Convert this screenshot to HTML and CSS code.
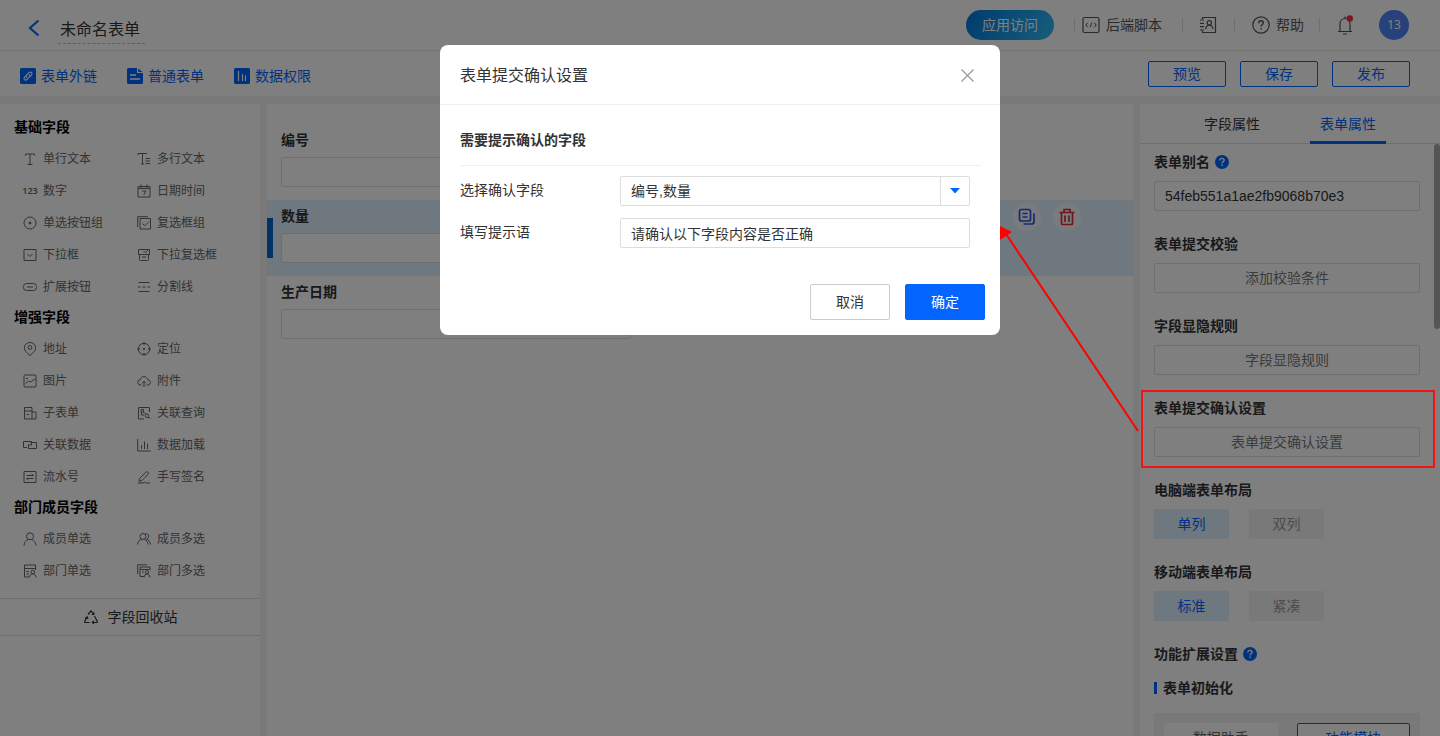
FILE: index.html
```html
<!DOCTYPE html>
<html lang="zh-CN">
<head>
<meta charset="utf-8">
<title>未命名表单</title>
<link rel="stylesheet" href="styles.css">
</head>
<body>
<div class="app">
  <header class="topbar">
    <button class="back" aria-label="返回"><svg width="12" height="18" viewBox="0 0 12 18"><path d="M10.500 1.500 2 9l8.500 7.500" fill="none" stroke="#0265ff" stroke-width="2.200"/></svg></button>
    <h1 class="form-name">未命名表单</h1>
    <div class="top-actions">
      <button class="visit">应用访问</button>
      <button class="top-item script"><svg width="18" height="18" viewBox="0 0 18 18" class="ln"><rect x="1" y="1.500" width="16" height="15" rx="1.500"/><path d="M5.800 6.800 3.800 9l2 2.200M12.200 6.800l2 2.200-2 2.200M9.800 6.800l-1.600 4.400" stroke-width="1"/></svg><span>后端脚本</span></button>
      <button class="top-item contacts" aria-label="通讯录"><svg width="18" height="18" viewBox="0 0 18 18" class="ln"><path d="M3.500 3V1.500h13v15h-13V15M1 4h4M1 7.300h4M1 10.700h4M1 14h4"/><circle cx="10.300" cy="6.800" r="2.200"/><path d="M6.600 13.200c.4-2.600 1.800-4 3.700-4s3.300 1.400 3.700 4"/></svg></button>
      <button class="top-item help"><svg width="18" height="18" viewBox="0 0 18 18" class="ln"><circle cx="9" cy="9" r="8.200"/><path d="M6.700 7.200c0-1.500 1-2.400 2.300-2.400s2.300.9 2.300 2.100c0 1.600-2.200 1.800-2.200 3.700M9.100 12v1.500" stroke-width="1.400"/></svg><span>帮助</span></button>
      <button class="top-item bell" aria-label="消息"><svg width="18" height="20" viewBox="0 0 18 20"><path class="ln" d="M2 16.500h14M4 16.500V9c0-3.200 2-5.500 5-5.500s5 2.300 5 5.500v7.500M9 1.500v2M7 19h4" stroke-width="1.300"/><circle cx="13.800" cy="3.500" r="3.200" fill="#f5333a"/></svg></button>
      <span class="avatar">13</span>
    </div>
  </header>

  <nav class="toolbar">
    <a class="tool" href="#"><svg width="16" height="16" viewBox="0 0 16 16"><rect width="16" height="16" rx="1.500" fill="#0265ff"/><g fill="none" stroke="#fff" stroke-width="1.100"><path d="M7 9.700c-1.200-.9-1-2 .2-3.200l1.800-1.800c1.800-1.600 4 .4 2.600 2.200L10 8.700"/><path d="M9 6.500c1.200.9 1 2-.2 3.200L7 11.500c-1.800 1.600-4-.4-2.600-2.200L6 7.500"/></g></svg>表单外链</a>
    <a class="tool" href="#"><svg width="16" height="16" viewBox="0 0 16 16"><path d="M1.500 0H10v5h6v9.500a1.500 1.500 0 0 1-1.500 1.500h-13A1.500 1.500 0 0 1 0 14.500v-13A1.500 1.500 0 0 1 1.500 0z" fill="#0265ff"/><path d="M11.200.5 15.500 4h-4.300z" fill="#0265ff"/><path d="M3 7h6M3 11h10" stroke="#fff" stroke-width="1.400"/></svg>普通表单</a>
    <a class="tool" href="#"><svg width="16" height="16" viewBox="0 0 16 16"><rect width="16" height="16" rx="1.500" fill="#0265ff"/><path d="M4.500 3v10M8.500 6v7M11.500 7.500V13" stroke="#fff" stroke-width="1.200"/></svg>数据权限</a>
    <div class="form-actions">
      <button>预览</button><button>保存</button><button>发布</button>
    </div>
  </nav>

  <main class="workspace">
    <aside class="palette">
      <div class="palette-list">
        <h2>基础字段</h2>
        <div class="fields">
          <button><svg viewBox="0 0 14 14"><path d="M2.500 3.500V2h9v1.500M7 2v10.500M4.500 12.500h5"/></svg>单行文本</button>
          <button><svg viewBox="0 0 14 14"><path d="M1 3V1.500h9M5.500 1.500V12M4 12h3M8.500 6.500H13M8.500 9H13M8.500 11.500H13"/></svg>多行文本</button>
          <button><span class="digits">123</span>数字</button>
          <button><svg viewBox="0 0 14 14"><path d="M1 2.500h12v10.500H1zM4 .5v4M10 .5v4M1 4.500h12M5 7h4L6.700 11"/></svg>日期时间</button>
          <button><svg viewBox="0 0 14 14"><circle cx="7" cy="7" r="6"/><circle cx="7" cy="7" r="1" fill="#666"/></svg>单选按钮组</button>
          <button><svg viewBox="0 0 14 14"><path d="M3 2.500h10.500v10.500H3zM.7 11V.7H11M5.500 7.500l2.300 2.300L12 5.500"/></svg>复选框组</button>
          <button><svg viewBox="0 0 14 14"><path d="M1 1.500h12v11H1zM4.500 6 7 8.500 9.500 6"/></svg>下拉框</button>
          <button><svg viewBox="0 0 14 14"><path d="M1.500 1.500h11v5h-11zM2.500 6.500v5c0 .6.400 1 1 1h7c.6 0 1-.4 1-1v-5M6.500 3l1.700 1.700L11 2.200M5 9h4"/></svg>下拉复选框</button>
          <button><svg viewBox="0 0 14 14"><rect x=".500" y="3.500" width="13" height="7" rx="3"/><path d="M4 7h6"/></svg>扩展按钮</button>
          <button><svg viewBox="0 0 14 14"><path d="M1.500 2.500h11M1.500 11.500h11M1 7h2.500M5.500 7h3M10.500 7H13"/></svg>分割线</button>
        </div>
        <h2>增强字段</h2>
        <div class="fields">
          <button><svg viewBox="0 0 14 14"><path d="M7 13.500C3.500 10.500 1.300 8.500 1.300 5.800a5.700 5.300 0 0 1 11.400 0c0 2.700-2.200 4.700-5.700 7.700z"/><circle cx="7" cy="5.500" r="1.900"/></svg>地址</button>
          <button><svg viewBox="0 0 14 14"><circle cx="7" cy="7" r="5.700"/><path d="M7 .2v3M7 10.800v3M.2 7h3M10.800 7h3"/><circle cx="7" cy="7" r=".700" fill="#666"/></svg>定位</button>
          <button><svg viewBox="0 0 14 14"><rect x="1" y="1" width="12" height="12" rx="1"/><path d="M3 4.500h2M2.500 9.500 5.500 7l2 1L12 5"/></svg>图片</button>
          <button><svg viewBox="0 0 14 14"><path d="M4.500 11H3.200C-.3 10.500.2 6 3 6c.6-4.500 7.300-4.500 8 0 3 0 3.300 4.500 0 5H9.500M7 13V7.500M5 9.300l2-2 2 2"/></svg>附件</button>
          <button><svg viewBox="0 0 14 14"><path d="M8 13H1.500V1.500H9V13M9 6h4v7H8M1.500 5H9M3.500 8.500H6"/></svg>子表单</button>
          <button><svg viewBox="0 0 14 14"><path d="M7 13H1.500V1.500h11V6M4 3.500h2.500V6H4zM6.500 6 9 8.500M4.500 6v3H7"/><circle cx="10" cy="9.800" r="1.800"/><path d="m11.300 11 2 2"/></svg>关联查询</button>
          <button><svg viewBox="0 0 14 14"><path d="M4 9.500H.5v-6H8.500V7H6.500M7.500 4.500h6v6h-8V6"/></svg>关联数据</button>
          <button><svg viewBox="0 0 14 14"><path d="M.7 1v12h13M4.500 11V7M7.500 11V3.500M10.500 11V5.500"/></svg>数据加载</button>
          <button><svg viewBox="0 0 14 14"><path d="M1 1.500h12v11H1zM3.500 5.500h7L8.700 4M10.500 8.500h-7L5.300 10"/></svg>流水号</button>
          <button><svg viewBox="0 0 14 14"><path d="M2.500 8.500 9.300 2c1-1 3 .7 2 2L5 10.500l-3 .8zM1 13h5l1.500-1 1 1H13"/></svg>手写签名</button>
        </div>
        <h2>部门成员字段</h2>
        <div class="fields">
          <button><svg viewBox="0 0 14 14"><circle cx="7" cy="4.300" r="3.500"/><path d="M1 13.500c.3-3.500 2-5.200 4.500-6M13 13.500c-.3-3.500-2-5.200-4.500-6"/></svg>成员单选</button>
          <button><svg viewBox="0 0 14 14"><circle cx="6" cy="4.500" r="3"/><path d="M.5 12.500c.3-3 1.800-4.500 4-5.200M11 12.500c-.3-3-1.500-4.500-3.500-5.200M8.500 1.500c4 0 4 4.500 1.200 5.700 2 .8 3.500 2.300 3.800 5.300"/></svg>成员多选</button>
          <button><svg viewBox="0 0 14 14"><path d="M6 13H1.500V1h11v5M1.500 4.500h11M3.500 7.500H6M3.500 10H6"/><circle cx="9.800" cy="8" r="1.800"/><path d="M6.500 13.500c.4-2.500 1.600-3.700 3.300-3.700s2.900 1.200 3.300 3.700"/></svg>部门单选</button>
          <button><svg viewBox="0 0 14 14"><path d="M.7 10V.8H10M7 12.500H3V3h10v3M3 5.500h10M5 8h2"/><circle cx="10" cy="8.300" r="1.600"/><path d="M7 13.500c.4-2.300 1.400-3.500 3-3.500s2.700 1.200 3 3.500"/></svg>部门多选</button>
        </div>
      </div>
      <button class="recycle"><svg width="16" height="14" viewBox="0 0 16 14"><path d="m5 4.500 3-3.700 2.700 3.700M11.500 6l2.800 5.500c.2.600 0 1-.6 1H9.500M6.500 12.500H2.300c-.6 0-.8-.5-.6-1L4 7M8.800 4.500h2V2.300M10.800 11l-1.500 1.500 1.500 1.300M2 8.500 4.200 7l.9 2"/></svg>字段回收站</button>
    </aside>

    <section class="canvas">
      <div class="form-field">
        <label for="f-no">编号</label>
        <input id="f-no" type="text">
      </div>
      <div class="form-field selected">
        <label for="f-qty">数量</label>
        <input id="f-qty" type="text">
        <div class="field-tools">
          <button aria-label="复制"><svg width="18" height="18" viewBox="0 0 18 18"><g fill="none" stroke="#2a55e8" stroke-width="1.700"><rect x="1.500" y="1.500" width="11" height="11.500" rx="2"/><path d="M4.500 5.500h5M4.500 9h5M5.500 16h8c1.700 0 2.500-.8 2.500-2.500v-8"/></g></svg></button>
          <button aria-label="删除"><svg width="16" height="18" viewBox="0 0 16 18"><path d="M.5 4.500h15M5 4.500V1.500h6v3M2.500 4.500v11c0 .6.400 1 1 1h9c.6 0 1-.4 1-1v-11M6 7.500V14M10 7.500V14" fill="none" stroke="#e02d3c" stroke-width="1.700"/></svg></button>
        </div>
      </div>
      <div class="form-field">
        <label for="f-date">生产日期</label>
        <input id="f-date" type="text">
      </div>
    </section>

    <aside class="props">
      <div class="tabs" role="tablist">
        <button role="tab" aria-selected="false">字段属性</button>
        <button role="tab" aria-selected="true" class="active">表单属性</button>
      </div>
      <div class="props-body">
        <div class="prop">
          <label for="alias">表单别名 <svg class="q" viewBox="0 0 14 14"><circle cx="7" cy="7" r="7" fill="#0265ff"/><path d="M4.900 5.500c0-1.300.9-2.100 2.100-2.100s2.100.7 2.100 1.800c0 1.500-2 1.500-2 3.200M7.100 9.600v1.400" fill="none" stroke="#fff" stroke-width="1.400"/></svg></label>
          <input id="alias" type="text" value="54feb551a1ae2fb9068b70e3">
        </div>
        <div class="prop"><h3>表单提交校验</h3><button class="wide">添加校验条件</button></div>
        <div class="prop"><h3>字段显隐规则</h3><button class="wide">字段显隐规则</button></div>
        <div class="prop"><h3>表单提交确认设置</h3><button class="wide">表单提交确认设置</button></div>
        <div class="prop"><h3>电脑端表单布局</h3><div class="choice"><button class="on">单列</button><button>双列</button></div></div>
        <div class="prop"><h3>移动端表单布局</h3><div class="choice"><button class="on">标准</button><button>紧凑</button></div></div>
        <div class="extend">
          <h3>功能扩展设置 <svg class="q" viewBox="0 0 14 14"><circle cx="7" cy="7" r="7" fill="#0265ff"/><path d="M4.900 5.500c0-1.300.9-2.100 2.100-2.100s2.100.7 2.100 1.800c0 1.500-2 1.500-2 3.200M7.100 9.600v1.400" fill="none" stroke="#fff" stroke-width="1.400"/></svg></h3>
          <h4>表单初始化</h4>
          <div class="init"><button>数据助手</button><button class="on">功能模块</button></div>
        </div>
      </div>
      <div class="scrollbar"></div>
    </aside>
  </main>
</div>

<div class="mask">
  <form class="dialog" role="dialog" aria-labelledby="dlg-title">
    <header class="dialog-head">
      <h2 id="dlg-title">表单提交确认设置</h2>
      <button type="button" class="close" aria-label="关闭"><svg width="13" height="13" viewBox="0 0 13 13"><path d="m.5.500 12 12M12.500.500l-12 12" stroke="#999" stroke-width="1.300"/></svg></button>
    </header>
    <div class="dialog-body">
      <h3>需要提示确认的字段</h3>
      <div class="row">
        <label for="pick">选择确认字段</label>
        <div class="select">
          <select id="pick"><option>编号,数量</option></select>
          <span class="caret"><svg width="10" height="6" viewBox="0 0 10 6"><path d="M0 0h10L5 5.500z" fill="#0265ff"/></svg></span>
        </div>
      </div>
      <div class="row">
        <label for="hint">填写提示语</label>
        <input id="hint" type="text" value="请确认以下字段内容是否正确">
      </div>
    </div>
    <footer class="dialog-foot">
      <button type="button">取消</button>
      <button type="submit" class="primary">确定</button>
    </footer>
  </form>
  <svg class="arrow" width="140" height="206" viewBox="0 0 140 206"><path d="M138 205 6 8" stroke="#f00" stroke-width="2"/><path d="M0 0 12 6 0 14z" fill="#f00"/></svg>
  <div class="marker"></div>
</div>
</body>
</html>
```
FILE: styles.css
```css
* { box-sizing: border-box; }

body {
  margin: 0;
  font-family: "Liberation Sans", "Noto Sans CJK SC", sans-serif;
  font-size: 14px;
  line-height: 20px;
  color: #333;
  overflow: hidden;
}

h1, h2, h3, h4 { margin: 0; font-size: 14px; font-weight: bold; }

button, input, select { font: inherit; color: inherit; margin: 0; }

button { background: none; border: 0; padding: 0; cursor: pointer; white-space: nowrap; }

svg { flex: none; display: block; }

.ln { fill: none; stroke: #555; stroke-width: 1.2; }

.app { height: 100vh; display: flex; flex-direction: column; background: #f2f2f2; }

/* Top bar */
.topbar {
  flex: none;
  display: flex;
  align-items: center;
  height: 51px;
  padding: 0 31px 0 28px;
  background: #fff;
  border-bottom: 1px solid #e8e8e8;
}
.back { padding-top: 6px; }
.form-name {
  margin: 14px 0 6px 18px;
  padding: 5px 5px 3px 2px;
  font-size: 16px;
  line-height: 20px;
  font-weight: normal;
  border-bottom: 1px dashed #bbb;
}
.top-actions { margin-left: auto; display: flex; align-items: center; color: #555; }
.visit {
  width: 88px;
  height: 30px;
  margin-right: 20px;
  border-radius: 15px;
  background: linear-gradient(120deg, #0078dc, #30bbf5);
  color: #fff;
}
.top-item { display: flex; align-items: center; height: 18px; }
.top-item::before { content: ""; width: 1px; height: 14px; background: #ddd; }
.script { gap: 6px; margin-right: 20px; }
.script::before { margin-right: 1px; }
.contacts { gap: 16px; margin-right: 17px; }
.help { gap: 6px; margin-right: 15px; }
.help::before { margin-right: 11px; }
.bell { gap: 16px; margin-right: 25px; }
.avatar {
  width: 30px;
  height: 30px;
  border-radius: 50%;
  background: #4f82f7;
  color: #fff;
  font-family: "Noto Sans", sans-serif;
  font-size: 12px;
  line-height: 30px;
  text-align: center;
}

/* Form toolbar */
.toolbar {
  flex: none;
  display: flex;
  align-items: center;
  gap: 30px;
  height: 45px;
  padding: 0 30px 0 20px;
  background: #fff;
}
.tool { display: flex; align-items: center; gap: 5px; padding-top: 4px; color: #0265ff; text-decoration: none; }
.form-actions { margin-left: auto; display: flex; gap: 14px; }
.form-actions button {
  width: 78px;
  height: 26px;
  border: 1px solid #0265ff;
  border-radius: 2px;
  color: #0265ff;
}

/* Three column workspace */
.workspace {
  flex: 1;
  min-height: 0;
  margin-top: 8px;
  display: grid;
  grid-template-columns: 260px 1fr 300px;
  gap: 7px;
}
.workspace > * { background: #fff; min-height: 0; }

.palette-list { padding: 8px 0 12px; }
.palette-list h2 { padding-left: 14px; line-height: 30px; color: #000; }
.fields { display: grid; grid-template-columns: 114px 1fr; padding-left: 23px; }
.fields button {
  display: flex;
  align-items: center;
  gap: 6px;
  height: 32px;
  padding-top: 1px;
  font-size: 12px;
  color: #666;
}
.fields svg { width: 14px; height: 14px; }
.fields svg, .recycle svg { fill: none; stroke: #666; stroke-width: 1; }
.digits { width: 14px; display: flex; justify-content: center; font-family: "Noto Sans", sans-serif; font-size: 9px; font-weight: 600; }
.recycle {
  width: 100%;
  height: 38px;
  display: flex;
  align-items: center;
  justify-content: center;
  gap: 9px;
  border-top: 1px solid #ddd;
  border-bottom: 1px solid #ddd;
}
.recycle svg { stroke: #333; stroke-width: 1.2; }

.canvas { padding-top: 20px; }
.form-field { position: relative; height: 76px; padding: 6px 14px 0; }
.form-field label { display: block; height: 27px; font-weight: bold; }
.form-field input { display: block; width: 350px; height: 30px; border: 1px solid #ddd; border-radius: 2px; background: #fff; }
.selected { background: #e0f0ff; }
.selected::before {
  content: "";
  position: absolute;
  left: 0;
  top: 18px;
  width: 6px;
  height: 40px;
  background: #0265c8;
}
.field-tools { position: absolute; right: 52px; top: 3px; display: flex; gap: 12px; }
.field-tools button {
  width: 28px;
  height: 28px;
  display: flex;
  align-items: center;
  justify-content: center;
  border-radius: 50%;
  background: #f4f6fa;
}

/* Properties */
.props { position: relative; overflow: hidden; }
.tabs {
  display: flex;
  justify-content: center;
  gap: 40px;
  height: 40px;
  border-bottom: 1px solid #ddd;
}
.tabs button { width: 76px; height: 40px; }
.tabs .active { color: #0265ff; border-bottom: 3px solid #0265ff; padding-top: 3px; }
.props-body { padding: 8px 20px 0 14px; display: flex; flex-direction: column; gap: 23px; }
.prop { display: flex; flex-direction: column; gap: 9px; }
.prop label, .extend h3 { display: flex; align-items: center; gap: 5px; font-weight: bold; }
.q { width: 14px; height: 14px; }
.prop input { width: 100%; height: 30px; padding: 0 10px; border: 1px solid #ddd; border-radius: 2px; }
.wide { height: 30px; border: 1px solid #ddd; border-radius: 2px; color: #777; }
.choice { display: flex; gap: 20px; }
.choice button { width: 75px; height: 30px; background: #f2f2f2; color: #999; }
.choice .on { background: #e0f0ff; color: #0265ff; }
.extend h4 { display: flex; align-items: center; gap: 6px; margin: 14px 0 15px; }
.extend h4::before { content: ""; width: 3px; height: 12px; background: #0265ff; }
.init { display: grid; grid-template-columns: 1fr 1fr; gap: 19px; padding: 10px; background: #f2f2f2; }
.init button { height: 30px; background: #fff; color: #666; }
.init .on { border: 1px solid #0265ff; border-radius: 2px; color: #0265ff; }
.scrollbar {
  position: absolute;
  top: 40px;
  right: 0;
  width: 6px;
  height: 185px;
  border-radius: 3px;
  background: #aaa;
}

/* Dialog */
.mask {
  position: fixed;
  inset: 0;
  padding-top: 45px;
  background: rgba(0, 0, 0, 0.5);
}
.dialog { width: 560px; margin: 0 auto; border-radius: 8px; background: #fff; }
.dialog-head {
  display: flex;
  align-items: center;
  justify-content: space-between;
  height: 60px;
  padding: 2px 26px 0 20px;
  border-bottom: 1px solid #eee;
}
.dialog-head h2 { font-size: 16px; font-weight: normal; }
.dialog-body { padding: 25px 19px 36px 20px; }
.dialog-body h3 { padding-bottom: 15px; margin-bottom: 10px; border-bottom: 1px solid #eee; }
.row { display: grid; grid-template-columns: 160px 350px; align-items: start; margin-bottom: 12px; }
.row:last-child { margin-bottom: 0; }
.row label { line-height: 28px; }
.row input, .select { width: 100%; height: 30px; border: 1px solid #ddd; border-radius: 2px; }
.row input { padding: 0 10px; }
.select { position: relative; }
.select select { width: 100%; height: 28px; padding: 0 40px 0 10px; border: 0; background: none; appearance: none; }
.caret {
  position: absolute;
  top: 0;
  right: 0;
  bottom: 0;
  width: 29px;
  display: flex;
  align-items: center;
  justify-content: center;
  border-left: 1px solid #ddd;
  pointer-events: none;
}
.dialog-foot { display: flex; justify-content: flex-end; gap: 15px; padding: 0 15px 15px; }
.dialog-foot button { width: 80px; height: 36px; border: 1px solid #ccc; border-radius: 2px; }
.dialog-foot .primary { border-color: #0265ff; background: #0265ff; color: #fff; }

/* Annotation over the page */
.arrow { position: absolute; top: 226px; right: 300px; }
.marker {
  position: absolute;
  top: 390px;
  right: 5px;
  width: 294px;
  height: 78px;
  border: 2px solid #f01414;
}
```
